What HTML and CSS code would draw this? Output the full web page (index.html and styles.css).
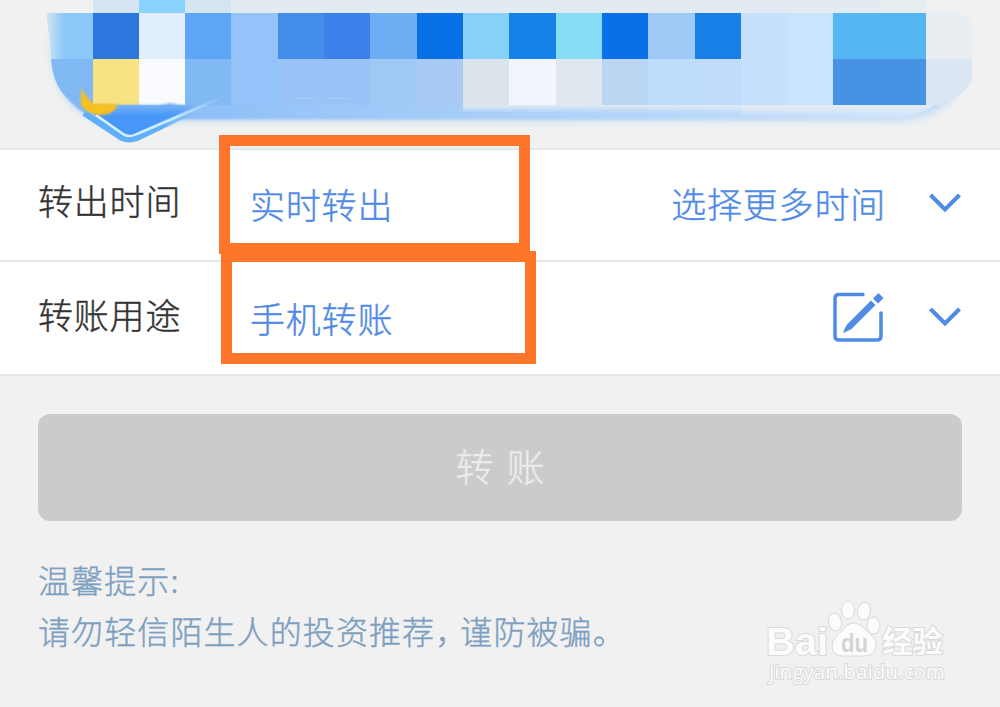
FILE: index.html
```html
<!DOCTYPE html>
<html lang="zh-CN">
<head>
    <meta charset="UTF-8">
    <meta name="viewport" content="width=device-width, initial-scale=1.0">
    <title>转账</title>
    <link rel="stylesheet" href="styles.css">
</head>
<body>
    <div class="banner">
        <svg width="1000" height="148" viewBox="0 0 1000 148">
            <defs>
                <filter id="soft" x="-10%" y="-30%" width="120%" height="160%"><feGaussianBlur stdDeviation="5"/></filter>
                <filter id="soft1" x="-30%" y="-30%" width="160%" height="160%"><feGaussianBlur stdDeviation="1.2"/></filter>
                <linearGradient id="bar" x1="0" x2="1" y1="0" y2="0">
                    <stop offset="0" stop-color="#7cb8f6"/>
                    <stop offset=".3" stop-color="#9bc6f8"/>
                    <stop offset=".65" stop-color="#b4d5f9"/>
                    <stop offset="1" stop-color="#d0e6fc"/>
                </linearGradient>
                <linearGradient id="fade" x1="0" x2="0" y1="0" y2="1">
                    <stop offset="0" stop-color="#e3eaf2"/>
                    <stop offset="1" stop-color="#e3eaf2" stop-opacity="0"/>
                </linearGradient>
                <linearGradient id="shine" x1="0" x2="1" y1="0" y2="0">
                    <stop offset="0" stop-color="#d9f5ff"/>
                    <stop offset=".6" stop-color="#c8ecff"/>
                    <stop offset="1" stop-color="#b4dafa" stop-opacity="0"/>
                </linearGradient>
                <linearGradient id="edge" x1="0" x2="1" y1="0" y2="0">
                    <stop offset="0" stop-color="#5facfa"/>
                    <stop offset=".6" stop-color="#62b0fb"/>
                    <stop offset="1" stop-color="#8fc4f8" stop-opacity="0"/>
                </linearGradient>
                <linearGradient id="left" x1="46" x2="64" y1="0" y2="0" gradientUnits="userSpaceOnUse">
                    <stop offset="0" stop-color="#d4e6f4"/>
                    <stop offset="1" stop-color="#8bc7f7"/>
                </linearGradient>
                <linearGradient id="point" x1="0" x2="0" y1="102" y2="116" gradientUnits="userSpaceOnUse">
                    <stop offset="0" stop-color="#86b9f7"/>
                    <stop offset="1" stop-color="#4897f8"/>
                </linearGradient>
                <clipPath id="round"><path d="M46 0H972V82Q958 105 940 105H78Q50 92 51 50L46 13Z"/></clipPath>
            </defs>
            <path d="M50 30Q50 106 100 120H900Q935 118 955 95L950 70H60Z" fill="#a9d2f5" opacity=".8" filter="url(#soft)"/>
            <path d="M52 50Q54 95 84 113L110 119.500H896Q918 117 940 100V60Z" fill="url(#bar)" filter="url(#soft1)"/>
            <path d="M463 105H932L918 113H463Z" fill="url(#fade)"/>
            <path d="M741 105H934L916 117H741Z" fill="url(#fade)"/>
            <g clip-path="url(#round)" shape-rendering="crispEdges">
                <path fill="#d5e4f1" d="M93 0h138v13H93z"/>
                <path fill="#8bd3ff" d="M139 0h46v13h-46z"/>
                <path fill="#e3ebf2" d="M231 0h649v13H231z"/>
                <path fill="#e7eef2" d="M880 0h46v13h-46z"/>
                <path fill="url(#left)" d="M46 13h47v46H46z"/>
                <path fill="#2b77de" d="M93 13h46v46H93z"/>
                <path fill="#e0eefe" d="M139 13h46v46h-46z"/>
                <path fill="#5fa5f6" d="M185 13h46v46h-46z"/>
                <path fill="#93c3f8" d="M231 13h47v92h-47z"/>
                <path fill="#438eea" d="M278 13h46v46h-46z"/>
                <path fill="#3b80eb" d="M324 13h46v46h-46z"/>
                <path fill="#6cadf3" d="M370 13h47v46h-47z"/>
                <path fill="#0870e6" d="M417 13h46v46h-46z"/>
                <path fill="#87d0f8" d="M463 13h46v46h-46z"/>
                <path fill="#1681e8" d="M509 13h47v46h-47z"/>
                <path fill="#87dcf7" d="M556 13h46v46h-46z"/>
                <path fill="#0b6fe7" d="M602 13h46v46h-46z"/>
                <path fill="#9ec9f6" d="M648 13h47v46h-47z"/>
                <path fill="#187fe7" d="M695 13h46v46h-46z"/>
                <path fill="#c6e0fd" d="M741 13h46v92h-46z"/>
                <path fill="#cae4fe" d="M787 13h46v92h-46z"/>
                <path fill="#54b6f2" d="M833 13h93v46h-93z"/>
                <path fill="#81b9f4" d="M46 59h47v46H46z"/>
                <path fill="#f9e281" d="M93 59h46v46H93z"/>
                <path fill="#fafbff" d="M139 59h46v46h-46z"/>
                <path fill="#80b9f4" d="M185 59h46v46h-46z"/>
                <path fill="#99c3f6" d="M278 59h92v46h-92z"/>
                <path fill="#9fc9f5" d="M370 59h47v46h-47z"/>
                <path fill="#a8caf4" d="M417 59h46v46h-46z"/>
                <path fill="#dbe3eb" d="M463 59h46v46h-46z"/>
                <path fill="#f2f6fc" d="M509 59h47v46h-47z"/>
                <path fill="#e0e8ef" d="M556 59h46v46h-46z"/>
                <path fill="#bad6f3" d="M602 59h46v46h-46z"/>
                <path fill="#bedcfb" d="M648 59h47v46h-47z"/>
                <path fill="#c1dcfb" d="M695 59h46v46h-46z"/>
                <path fill="#4792e2" d="M833 59h93v46h-93z"/>
            </g>
            <path fill="#e8eef2" d="M926 13H960Q970 16 972 28V59H926Z"/>
            <path fill="#dae6f3" d="M926 59H972V82Q958 100 940 105H926Z"/>
            <!-- faint remains of text -->
            <path d="M294 98.500h22M325 98.500h24M385 98h10M412 96l2 4M432 98h3M450 98h8" stroke="#a9ccf2" stroke-width="1" fill="none"/>
            <!-- pointer under the card -->
            <path d="M92 105H160L170 103L180 105H198L135 136Q129 139 123 136L96 117Z" fill="url(#point)" filter="url(#soft1)"/>
            <path d="M84 113L122 138Q129 141 137 138L216 100" fill="none" stroke="url(#edge)" stroke-width="6"/>
            <path d="M96 115L123 134Q129 138 137 134L226 96" fill="none" stroke="url(#shine)" stroke-width="2.500"/>
            <path d="M81 88Q87 99 94 104H118Q114 115 100 115Q84 113 81 104Z" fill="#fac01b" filter="url(#soft1)"/>
        </svg>
    </div>

    <div class="row">
        <span class="label">转出时间</span>
        <span class="value">实时转出<i class="mark mark-time"></i></span>
        <span class="more">选择更多时间</span>
        <svg class="arrow" width="32" height="20" viewBox="0 0 32 20"><path d="M1.500 2L16 16.500L30.500 2"/></svg>
    </div>
    <div class="row row-usage">
        <span class="label">转账用途</span>
        <span class="value">手机转账<i class="mark mark-usage"></i></span>
        <svg class="edit" width="52" height="52" viewBox="0 0 52 52">
            <path class="frame" d="M31 3.500H7Q3 3.500 3 7.500V45Q3 49 7 49H45Q49 49 49 45V22"/>
            <path class="pen" d="M39 9.500L43.500 14L19.500 38Q16 40 11 42Q12.500 37 15 33.500ZM41 7.500L46.500 2L51.500 7L46 12.500Z"/>
        </svg>
        <svg class="arrow" width="32" height="20" viewBox="0 0 32 20"><path d="M1.500 2L16 16.500L30.500 2"/></svg>
    </div>

    <button class="submit"><span>转</span><span>账</span></button>

    <div class="tips">
        <p>温馨提示:</p>
        <p>请勿轻信陌生人的投资推荐<span class="comma">，</span>谨防被骗。</p>
    </div>

    <svg class="watermark" width="190" height="100" viewBox="0 0 190 100">
        <text class="bai" x="6" y="65" textLength="62" lengthAdjust="spacingAndGlyphs">Bai</text>
        <g class="paw">
            <ellipse cx="75" cy="32" rx="6.500" ry="9" transform="rotate(-8 75 32)"/>
            <ellipse cx="88" cy="20" rx="6.500" ry="9"/>
            <ellipse cx="104" cy="21" rx="6.500" ry="9" transform="rotate(10 104 21)"/>
            <ellipse cx="113.500" cy="35.500" rx="6.500" ry="8.500"/>
            <path d="M94 33Q100 33 105 39Q117 48 116 56Q115 66 104 66H83Q72 66 72 56Q72 49 82 41Q87 33 94 33Z"/>
        </g>
        <text class="du" x="81" y="62" textLength="27" lengthAdjust="spacingAndGlyphs">du</text>
        <text class="jy" x="122" y="62" textLength="61" lengthAdjust="spacingAndGlyphs">经验</text>
        <text class="site" x="9" y="89" textLength="176" lengthAdjust="spacingAndGlyphs">jingyan.baidu.com</text>
    </svg>
</body>
</html>
```
FILE: styles.css
```css
body {
    margin: 0;
    height: 707px;
    overflow: hidden;
    position: relative;
    background-color: #f1f1f1;
    font-family: "Noto Sans CJK SC", sans-serif;
    font-weight: 300;
    -webkit-text-stroke: 0.4px;
}
.banner {
    height: 148px;
}
.banner svg {
    display: block;
}
.row {
    display: flex;
    align-items: center;
    box-sizing: border-box;
    height: 112px;
    padding: 0 39px 0 38px;
    background-color: #fff;
    border-top: 2px solid #e6e6e6;
    font-size: 35px;
    line-height: 50px;
    letter-spacing: 0.8px;
    color: #333;
}
.row-usage {
    height: 116px;
    border-bottom: 2px solid #e6e6e6;
}
.label {
    width: 212px;
    margin-top: -10px;
}
.row-usage .label {
    margin-top: -8px;
}
.value {
    position: relative;
    margin-top: -2px;
    color: #4f8ae6;
}
.row-usage .value {
    margin-top: 0;
}
.more {
    margin-left: auto;
    margin-top: -5px;
    color: #4f8ae6;
}
.mark {
    position: absolute;
    box-sizing: border-box;
    border: 11px solid #ff7529;
}
.mark-time {
    left: -31px;
    top: -44px;
    width: 311px;
    height: 119px;
}
.mark-usage {
    left: -29px;
    top: -42px;
    width: 315px;
    height: 113px;
}
.arrow {
    margin-left: 43px;
    margin-top: -4px;
    fill: none;
    stroke: #4f8ae6;
    stroke-width: 4;
}
.edit {
    margin-left: auto;
    margin-top: -2px;
}
.row-usage .arrow {
    margin-left: 45px;
    margin-top: -2px;
}
.frame {
    fill: none;
    stroke: #4f8ae6;
    stroke-width: 3.5;
    stroke-linecap: round;
}
.pen {
    fill: #4f8ae6;
}
.submit {
    display: flex;
    justify-content: center;
    align-items: center;
    gap: 13px;
    width: 924px;
    height: 107px;
    margin: 38px auto 0;
    padding: 0 0 6px;
    border: 0;
    border-radius: 12px;
    background-color: #cbcbcb;
    color: #ececec;
    font: inherit;
    font-size: 38px;
}
.tips {
    margin: 33px 0 0 38px;
    font-size: 32px;
    line-height: 51px;
    letter-spacing: 1.1px;
    color: #7d9fc0;
}
.tips p {
    margin: 0;
}
.comma {
    margin-right: 8px;
    font-feature-settings: "halt";
}
.watermark {
    position: absolute;
    left: 760px;
    top: 590px;
    fill: #fcfcfc;
    stroke: #d9d9d9;
    stroke-width: 1;
    -webkit-text-stroke: 0;
}
.watermark text {
    paint-order: stroke;
    stroke-width: 2;
}
.bai {
    font: bold 38px "Liberation Sans", sans-serif;
}
.watermark .du {
    font: bold 25px "Liberation Sans", sans-serif;
    fill: #d4d4d4;
    stroke: none;
}
.jy {
    font: bold 30px/1 "Noto Sans CJK SC", sans-serif;
}
.site {
    font: 20px "Open Sans", sans-serif;
}
```
